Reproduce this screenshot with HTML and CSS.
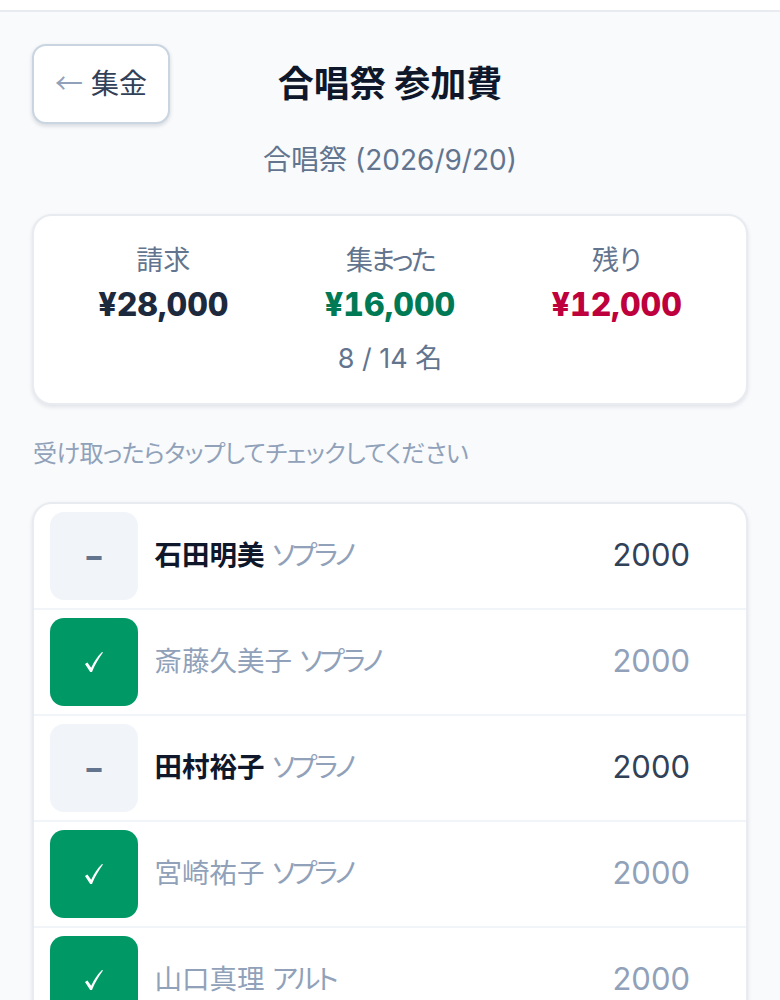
FILE: index.html
```html
<!doctype html>
<html lang="ja">

<head>
    <meta charset="utf-8">
    <meta name="viewport" content="width=device-width, initial-scale=1">
    <title>合唱祭 参加費</title>
    <link rel="stylesheet" href="styles.css">
</head>

<body>
<div class="topbar"></div>
<main class="page">
    <header class="head">
        <button class="back"><span class="back-arrow">←</span> 集金</button>
        <h1 class="title">合唱祭 参加費</h1>
    </header>
    <p class="sub">合唱祭 (2026/9/20)</p>

    <section class="summary">
        <div class="stats">
            <div class="stat">
                <div class="stat-label">請求</div>
                <div class="stat-value">¥28,000</div>
            </div>
            <div class="stat">
                <div class="stat-label kana">集まった</div>
                <div class="stat-value green">¥16,000</div>
            </div>
            <div class="stat">
                <div class="stat-label">残り</div>
                <div class="stat-value red">¥12,000</div>
            </div>
        </div>
        <div class="count">8 / 14 名</div>
    </section>

    <p class="hint">受け取ったらタップしてチェックしてください</p>

    <section class="list">
        <div class="row">
            <div class="tile">–</div>
            <div class="who"><span class="name">石田明美</span> <span class="part">ソプラノ</span></div>
            <div class="amount">2000</div>
        </div>
        <div class="row paid">
            <div class="tile"><svg class="check" viewBox="0 0 18 20"><path d="M0 12 L2.4 10.6 L6.2 15.8 C8.8 10 12.4 4.6 17 0 L18 0.6 C13.6 6.6 10 12.6 7 20 L5.2 20 Z"/></svg></div>
            <div class="who"><span class="name">斎藤久美子</span> <span class="part">ソプラノ</span></div>
            <div class="amount">2000</div>
        </div>
        <div class="row">
            <div class="tile">–</div>
            <div class="who"><span class="name">田村裕子</span> <span class="part">ソプラノ</span></div>
            <div class="amount">2000</div>
        </div>
        <div class="row paid">
            <div class="tile"><svg class="check" viewBox="0 0 18 20"><path d="M0 12 L2.4 10.6 L6.2 15.8 C8.8 10 12.4 4.6 17 0 L18 0.6 C13.6 6.6 10 12.6 7 20 L5.2 20 Z"/></svg></div>
            <div class="who"><span class="name">宮崎祐子</span> <span class="part">ソプラノ</span></div>
            <div class="amount">2000</div>
        </div>
        <div class="row paid">
            <div class="tile"><svg class="check" viewBox="0 0 18 20"><path d="M0 12 L2.4 10.6 L6.2 15.8 C8.8 10 12.4 4.6 17 0 L18 0.6 C13.6 6.6 10 12.6 7 20 L5.2 20 Z"/></svg></div>
            <div class="who"><span class="name">山口真理</span> <span class="part">アルト</span></div>
            <div class="amount">2000</div>
        </div>
    </section>
</main>
</body>

</html>
```

FILE: styles.css
```css
html, body {
    margin: 0;
    height: 1000px;
    overflow: hidden;
}

body {
    background-color: #f8fafc;
    color: #0f172b;
    font-family: Inter, "Noto Sans CJK JP", sans-serif;
    font-feature-settings: "palt";
}

.topbar {
    height: 10px;
    background-color: #fff;
    border-bottom: 2px solid #e8ebf0;
}

.page {
    padding: 32px 32px 0;
}

.head {
    position: relative;
    display: flex;
    align-items: center;
    justify-content: center;
    height: 80px;
}

.back {
    position: absolute;
    left: 0;
    top: 0;
    width: 138px;
    height: 80px;
    padding: 0 0 4px;
    border: 2px solid #cad5e2;
    border-radius: 14px;
    background-color: #fff;
    box-shadow: 0 2px 4px rgba(15, 23, 42, 0.15);
    color: #314158;
    font-family: inherit;
    font-size: 28px;
    font-feature-settings: inherit;
}

.back-arrow {
    color: #90a1b9;
    font-family: "Noto Sans CJK JP", sans-serif;
}

.title {
    margin: 0 0 6px;
    font-size: 36px;
    font-weight: 700;
}

.sub {
    margin: 16px 0 0;
    text-align: center;
    color: #62748e;
    font-size: 28px;
    line-height: 40px;
}

.summary {
    margin-top: 34px;
    height: 191px;
    box-sizing: border-box;
    padding-top: 25px;
    background-color: #fff;
    border: 2px solid #e8ebf0;
    border-radius: 20px;
    box-shadow: 0 2px 4px rgba(15, 23, 42, 0.1);
    text-align: center;
}

.stats {
    display: grid;
    grid-template-columns: repeat(3, 1fr);
    padding: 0 16px;
}

.stat-label {
    color: #62748e;
    font-size: 27px;
    line-height: 40px;
}

.kana {
    letter-spacing: -2.5px;
}

.stat-value {
    margin-top: 1px;
    color: #1d293d;
    font-size: 32px;
    font-weight: 800;
    font-feature-settings: "tnum";
    line-height: 46px;
}

.green {
    color: #007a55;
}

.red {
    color: #be003c;
}

.count {
    margin-top: 11px;
    color: #62748e;
    font-size: 27px;
    line-height: 40px;
}

.hint {
    margin: 29px 0 0 1px;
    color: #90a1b9;
    font-size: 24px;
    line-height: 40px;
    letter-spacing: -0.5px;
}

.list {
    margin-top: 28px;
    background-color: #fff;
    border: 2px solid #e8ebf0;
    border-radius: 20px;
    box-shadow: 0 2px 4px rgba(15, 23, 42, 0.1);
}

.row {
    display: flex;
    align-items: center;
    gap: 16.5px;
    height: 104px;
    padding: 0 56px 0 16px;
    border-bottom: 2px solid #f1f5f9;
}

.tile {
    display: flex;
    align-items: center;
    justify-content: center;
    flex: none;
    width: 88px;
    height: 88px;
    border-radius: 14px;
    background-color: #f1f5f9;
    color: #62748e;
    font-size: 30px;
    font-weight: 800;
}

.paid .tile {
    background-color: #009966;
}

.check {
    width: 18px;
    height: 20px;
    fill: #fff;
}

.who {
    flex: 1;
    margin-bottom: 6px;
    font-size: 27.5px;
}

.name {
    font-weight: 700;
}

.part {
    color: #90a1b9;
    letter-spacing: -3px;
}

.paid .name {
    color: #90a1b9;
    font-weight: 400;
}

.amount {
    margin-bottom: 4px;
    color: #314158;
    font-size: 31px;
}

.paid .amount {
    color: #90a1b9;
}
```
